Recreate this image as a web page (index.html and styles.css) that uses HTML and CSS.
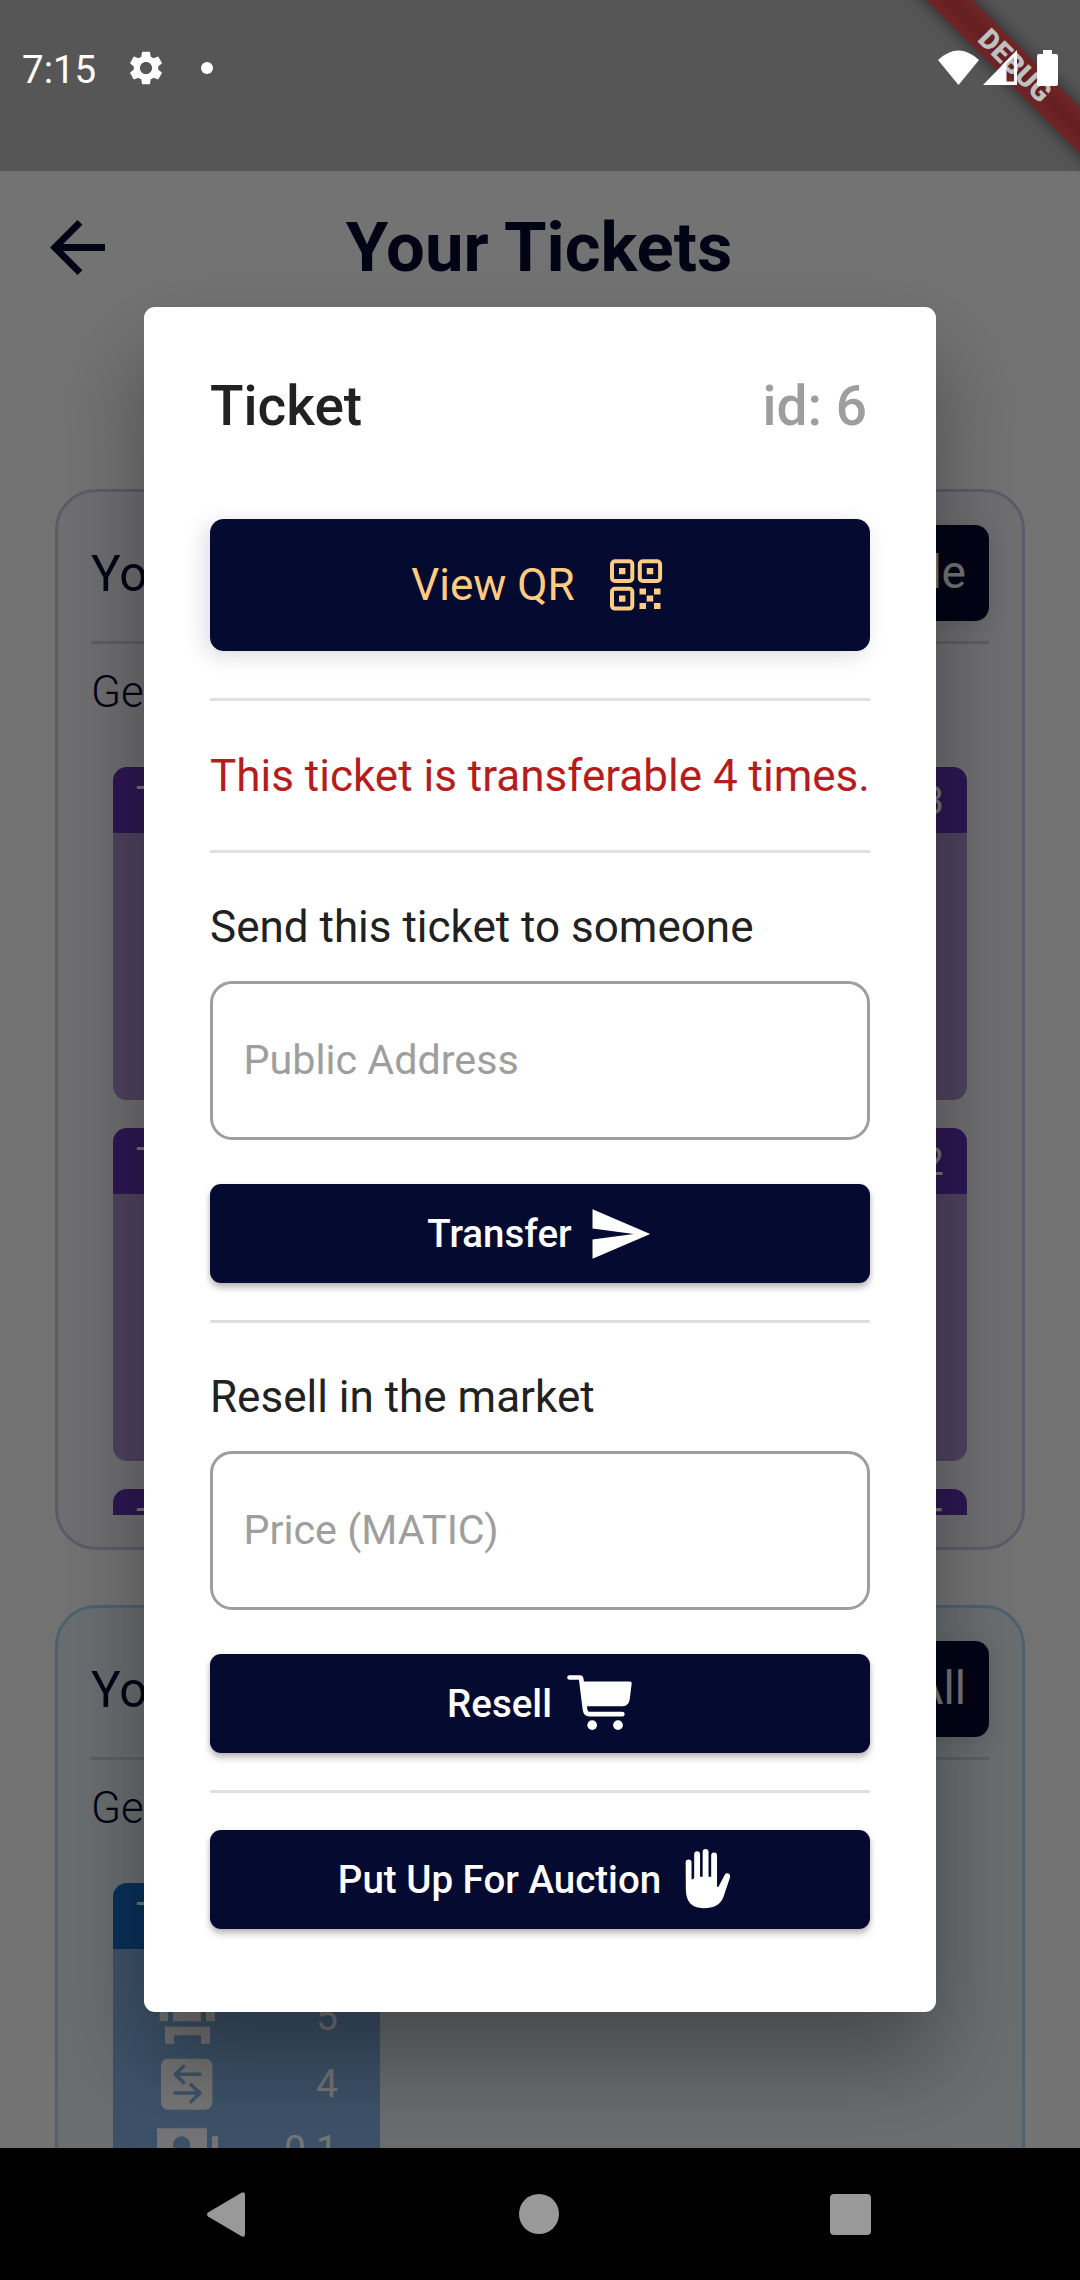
FILE: index.html
```html
<!DOCTYPE html>
<html lang="en">
<head>
<meta charset="utf-8">
<title>Your Tickets</title>
<link rel="stylesheet" href="styles.css">
</head>
<body>
<div class="phone">
  <div class="app">
    <div class="status-space"></div>
    <header class="app-bar">
      <svg class="back" viewBox="4 4 16 16"><path d="M20 11H7.83l5.59-5.59L12 4l-8 8 8 8 1.41-1.41L7.83 13H20v-2z"/></svg>
      <h1 class="app-title">Your Tickets</h1>
    </header>
    <main class="groups">
      <section class="group group-purple">
        <div class="group-head">
          <span class="group-name">Your Tickets</span>
          <span class="group-action">Resale</span>
        </div>
        <p class="group-kind">General</p>
        <div class="ticket-list clipped">
          <article class="ticket"><div class="ticket-head"><span>Ticket</span><span>3</span></div><div class="ticket-body"></div></article>
          <article class="ticket"><div class="ticket-head"><span>Ticket</span><span>2</span></div><div class="ticket-body"></div></article>
          <article class="ticket"><div class="ticket-head"><span>Ticket</span><span>5</span></div><div class="ticket-body"></div></article>
        </div>
      </section>
      <section class="group group-blue">
        <div class="group-head">
          <span class="group-name">Your Tickets</span>
          <span class="group-action">Sell All</span>
        </div>
        <p class="group-kind">General</p>
        <div class="ticket-list">
          <article class="ticket ticket-small">
            <div class="ticket-head"><span>Ticket</span></div>
            <div class="ticket-body">
              <div class="fact">
                <svg class="fact-icon" viewBox="111 -50 198 198"><path d="M119 -10h25v72h-25zM159 -30h84v92h-84zM258 -10h27v72h-27zM135 78h135v51h-27v-25h-81v25h-27z"/></svg>
                <span>5</span>
              </div>
              <div class="fact">
                <svg class="fact-icon" viewBox="111 151 198 198"><rect x="123" y="174" width="154" height="153" rx="21"/><path class="cut" d="M240 221H166M191 197L166 221L191 246M165 277H240M213 252L240 277L213 303"/></svg>
                <span>4</span>
              </div>
              <div class="fact">
                <svg class="fact-icon" viewBox="111 350 198 198"><path fill-rule="evenodd" d="M111 384h150v130h-150zM185 408a26 26 0 1 0 .1 0zM276 408h18v106h-18z"/></svg>
                <span>0.1</span>
              </div>
            </div>
          </article>
        </div>
      </section>
    </main>
  </div>
  <div class="barrier"></div>

  <div class="dialog">
    <div class="dialog-head"><span>Ticket</span><span class="ticket-id">id: 6</span></div>
    <div class="button button-qr">
      <span>View QR</span>
      <svg class="icon" viewBox="0 0 66 66">
        <g class="qr-frames"><rect x="9" y="9.2" width="20.3" height="19.8" rx="3"/><rect x="36.8" y="9.2" width="20.3" height="19.8" rx="3"/><rect x="9" y="36.8" width="20.3" height="19.8" rx="3"/></g>
        <path d="M16 16h6.4v6.2H16zM43.8 16h6.4v6.2h-6.4zM16 43.6h6.4v6.2H16zM36.5 36.5H43v6h-6.5zM51 36.5h6.500v6H51zM43.700 43.500h6.500v6h-6.500zM36.500 51H43v6h-6.500zM51 51h6.500v6H51z"/>
      </svg>
    </div>
    <hr class="rule rule-far">
    <p class="notice">This ticket is transferable 4 times.</p>
    <hr class="rule">
    <p class="label">Send this ticket to someone</p>
    <div class="field">Public Address</div>
    <div class="button">
      <span>Transfer</span>
      <svg class="icon" viewBox="0 0 24 24"><path d="M2.01 21L23 12 2.01 3 2 10l15 2-15 2z"/></svg>
    </div>
    <hr class="rule rule-near">
    <p class="label label-resell">Resell in the market</p>
    <div class="field">Price (MATIC)</div>
    <div class="button button-resell">
      <span>Resell</span>
      <svg class="icon" viewBox="18 31.5 198 198"><path class="cart-line" d="M28.500 54H59Q63 54 63.500 58L75 150Q77 164 88 164H187"/><path d="M66 66H209Q216 66 215 73L209 120Q206 140 189 140H76z"/><circle cx="96.500" cy="197" r="14.500"/><circle cx="174" cy="197" r="14.500"/></svg>
    </div>
    <hr class="rule rule-near">
    <div class="button button-last">
      <span>Put Up For Auction</span>
      <svg class="icon" viewBox="342 559.5 198 198"><path d="M377 609a8.800 8.800 0 0 1 17.600 0V661L402.500 656V584a8.800 8.800 0 0 1 17.600 0V652H428V577.500a8.800 8.800 0 0 1 17.600 0V652H453.500V587.500a8.800 8.800 0 0 1 17.600 0V682H475.500L494 646.500C499 637 513 642 510 654L490 713Q477 746 431 746C395 746 378 727 377.500 690Z"/></svg>
    </div>
  </div>

  <div class="ribbon-clip"><div class="ribbon">DEBUG</div></div>

  <div class="status-bar">
    <span class="clock">7:15</span>
    <svg class="gear" viewBox="2 2 20 20"><path d="M19.140 12.940c.04-.3.060-.610.060-.940 0-.320-.020-.640-.070-.940l2.030-1.580c.180-.140.230-.410.120-.610l-1.920-3.320c-.120-.220-.370-.290-.590-.220l-2.390.960c-.5-.380-1.030-.7-1.620-.940l-.360-2.540c-.040-.240-.240-.410-.480-.410h-3.840c-.240 0-.430.170-.470.410l-.360 2.540c-.590.240-1.130.570-1.620.940l-2.390-.96c-.220-.080-.470 0-.590.220L2.740 8.870c-.120.210-.080.470.120.610l2.030 1.580c-.05.3-.09.630-.09.940s.020.640.070.940l-2.030 1.580c-.180.140-.230.410-.120.610l1.920 3.320c.120.220.370.290.590.220l2.390-.96c.5.380 1.030.7 1.620.940l.360 2.540c.050.240.240.410.480.410h3.840c.240 0 .440-.170.470-.410l.360-2.540c.590-.240 1.130-.560 1.620-.940l2.390.96c.220.080.470 0 .590-.220l1.920-3.320c.120-.220.070-.470-.120-.610l-2.010-1.580zM12 15.600c-1.980 0-3.600-1.620-3.600-3.600s1.620-3.600 3.600-3.600 3.600 1.620 3.600 3.600-1.620 3.600-3.600 3.600z"/></svg>
    <span class="dot"></span>
    <span class="signals">
      <svg width="41" height="36" viewBox="0 0 41 36"><path d="M0 10Q20.500 -9 41 10L20.500 35z"/></svg>
      <svg width="34" height="35" viewBox="0 0 34 35"><path fill-rule="evenodd" d="M34 0V35H0zM23.500 14V31.500H31V6.500z"/></svg>
      <svg class="battery" width="21" height="36" viewBox="0 0 21 36"><path d="M6 0H15V4H19Q21 4 21 6V34Q21 36 19 36H2Q0 36 0 34V6Q0 4 2 4H6z"/></svg>
    </span>
  </div>

  <nav class="nav-bar">
    <svg class="nav-back" viewBox="0 0 38 45"><path d="M1 20.500L34.500 .8Q38 -1 38 3V42Q38 46 34.500 44.200L1 24.500Q-1 22.500 1 20.500z"/></svg>
    <span class="nav-home"></span>
    <span class="nav-recent"></span>
  </nav>
</div>
</body>
</html>
```
FILE: styles.css
```css
* { box-sizing: border-box; }
body {
  margin: 0;
  font-family: Roboto, "Noto Sans", sans-serif;
  color: #212121;
}
p, h1 { margin: 0; }
svg { display: block; flex: none; fill: currentColor; }

.phone {
  position: relative;
  display: flex;
  flex-direction: column;
  width: 1080px;
  height: 2280px;
  overflow: hidden;
  background: #000;
}

/* Page behind the dialog */
.app {
  height: 2148px;
  overflow: hidden;
  background: #fafafa;
  color: #050a30;
}
.status-space { height: 171px; background: #bbb; }
.app-bar {
  display: grid;
  grid-template-columns: 154px 1fr 156px;
  align-items: center;
  height: 153px;
}
.back { width: 55px; height: 55px; margin-left: 50px; }
.app-title {
  font-size: 68.75px;
  line-height: 80px;
  font-weight: 700;
  text-align: center;
}
.groups {
  display: flex;
  flex-direction: column;
  gap: 55px;
  padding: 165px 55px 0;
}
.group {
  height: 1061px;
  padding: 33px 33px 33px;
  border: 3px solid;
  border-radius: 41px;
}
.group-purple { border-color: #d1c4e9; background: #f1eff4; }
.group-blue { border-color: #a8d5f0; background: #e6eff4; }
.group-head {
  display: flex;
  justify-content: space-between;
  align-items: flex-start;
  height: 119px;
  border-bottom: 3px solid #cfcfd2;
}
.group-name { font-size: 49.5px; line-height: 58px; padding-top: 20px; }
.group-action {
  height: 96px;
  padding: 0 23px;
  border-radius: 14px;
  background: #050a30;
  box-shadow: 0 5px 22px rgba(5, 10, 48, .12);
  color: #fff;
  font-size: 46px;
  line-height: 94px;
}
.group-kind { margin-top: 20px; font-size: 44px; line-height: 56px; font-weight: 300; }
.ticket-list {
  display: flex;
  flex-direction: column;
  gap: 28px;
  margin-top: 47px;
  padding: 0 22px;
}
.clipped { height: 748px; overflow: hidden; }
.ticket { flex: none; height: 333px; border-radius: 14px; overflow: hidden; color: #fff; }
.ticket-head {
  display: flex;
  justify-content: space-between;
  height: 66px;
  padding: 0 23px;
  font-size: 38.5px;
  line-height: 68px;
}
.ticket-body { height: 267px; }
.group-purple .ticket-head { background: #6234b3; }
.group-purple .ticket-body { background: #aa92d0; }
.ticket-small { width: 267px; }
.group-blue .ticket-head { background: #1269c2; }
.group-blue .ticket-body { background: #86b4e4; color: #fff; padding-top: 35px; }
.fact {
  display: flex;
  justify-content: space-between;
  align-items: center;
  height: 66.5px;
  padding: 0 42px 0 44px;
  font-size: 39px;
}
.fact-icon { width: 66px; height: 66px; }
.cut { fill: none; stroke: #86b4e4; stroke-width: 10.5; stroke-linecap: round; stroke-linejoin: round; }

.barrier {
  position: absolute;
  inset: 0 0 132px;
  background: rgba(0, 0, 0, .54);
}

/* Dialog */
.dialog {
  position: absolute;
  left: 144px;
  top: 307px;
  width: 792px;
  height: 1704.5px;
  padding: 0 66px;
  border-radius: 11px;
  background: #fff;
  box-shadow: 0 48px 88px rgba(0, 0, 0, .34);
}
.dialog-head {
  display: flex;
  justify-content: space-between;
  height: 211.5px;
  padding: 66.5px 3px 0 0;
  font-size: 55px;
  line-height: 64px;
  font-weight: 500;
}
.ticket-id { color: #9e9e9e; }
.button {
  display: flex;
  align-items: center;
  justify-content: center;
  gap: 15px;
  height: 99px;
  margin-top: 44.5px;
  border-radius: 11px;
  background: #050a30;
  box-shadow: 0 5px 7px rgba(0, 0, 0, .24), 0 1px 5px rgba(0, 0, 0, .1);
  color: #fff;
  font-size: 38.5px;
  font-weight: 500;
}
.button-qr {
  gap: 28px;
  height: 132px;
  margin-top: 0;
  border-radius: 13.75px;
  box-shadow: -5px 5px 22px rgba(5, 10, 48, .14);
  color: #ffcc80;
  font-size: 44px;
  font-weight: 400;
}
.button-resell { gap: 14px; margin-top: 44px; padding-right: 1px; }
.button-last { gap: 13px; margin-top: 37px; padding-right: 2px; }
.icon { width: 66px; height: 66px; }
.qr-frames { fill: none; stroke: currentColor; stroke-width: 4; }
.cart-line { fill: none; stroke: currentColor; stroke-width: 14; stroke-linecap: round; }
.rule { height: 3px; margin: 0; border: 0; background: #e0e0e0; }
.rule-far { margin-top: 47.5px; }
.rule-near { margin-top: 37px; }
.notice {
  height: 149px;
  color: #b71c1c;
  font-size: 44px;
  line-height: 151px;
  white-space: nowrap;
}
.label { height: 127.5px; padding-top: 47.7px; font-size: 44px; line-height: 52px; }
.label-resell { padding-top: 48.3px; }
.field {
  height: 159px;
  padding: 0 30.5px;
  border: 3px solid #9e9e9e;
  border-radius: 22px;
  color: #9e9e9e;
  font-size: 41.25px;
  line-height: 152px;
}

/* Debug ribbon across the corner */
.ribbon-clip {
  position: absolute;
  top: 0;
  right: 0;
  width: 260px;
  height: 260px;
  overflow: hidden;
}
.ribbon {
  position: absolute;
  left: 45px;
  top: 48.5px;
  width: 300px;
  height: 33px;
  transform: rotate(45deg);
  background: linear-gradient(#702628, #651f20 50%, #702628);
  box-shadow: 0 0 17px rgba(0, 0, 0, .55);
  color: #c0c0c0;
  font-size: 28px;
  line-height: 33px;
  font-weight: 900;
  text-align: center;
}

/* System bars */
.status-bar {
  position: absolute;
  inset: 0 0 auto;
  display: flex;
  align-items: center;
  height: 135px;
  padding: 0 22px;
  color: #fff;
}
.clock { width: 107px; font-size: 38.5px; line-height: 46px; padding-top: 4px; }
.gear { width: 34px; height: 36px; }
.dot { width: 12px; height: 12px; margin-left: 38px; border-radius: 50%; background: #fff; }
.signals { display: flex; align-items: center; gap: 4px; margin-left: auto; }
.battery { margin-left: 16px; }

.nav-bar {
  display: flex;
  align-items: center;
  justify-content: space-between;
  height: 132px;
  padding: 0 209px 0 206.5px;
  color: #999;
}
.nav-back { width: 38px; height: 45px; }
.nav-home { width: 40px; height: 40px; margin-left: 3px; border-radius: 50%; background: #999; }
.nav-recent { width: 41px; height: 41px; border-radius: 4px; background: #999; }
```
